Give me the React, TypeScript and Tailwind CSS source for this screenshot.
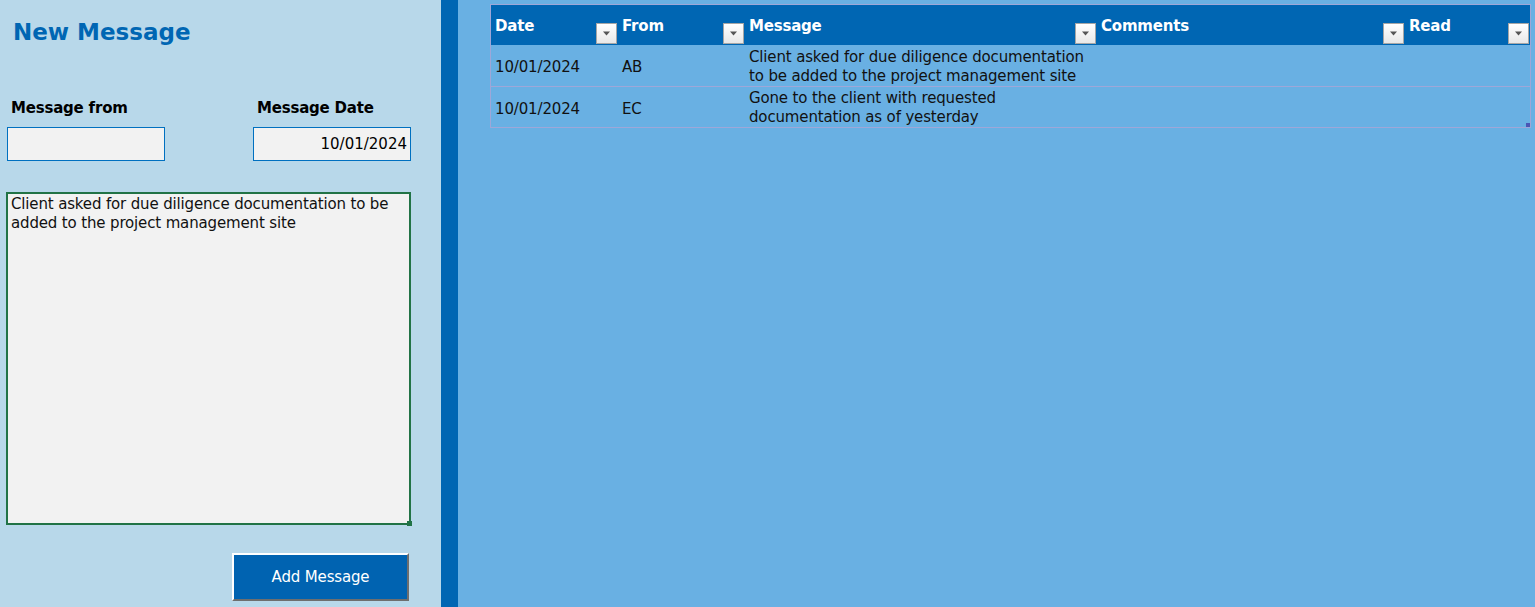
import { ReactNode } from "react";

const font = { fontFamily: '"DejaVu Sans", Verdana, sans-serif' };

function FilterButton() {
  return (
    <div className="w-[21px] h-[21px] border border-[#a6a6a6] bg-gradient-to-b from-white to-[#e8e8e8] flex items-center justify-center self-end mb-[1px] shrink-0">
      <svg width="9" height="5" viewBox="0 0 9 5">
        <path d="M1 0.5 L8 0.5 L4.5 4.5 Z" fill="#555" />
      </svg>
    </div>
  );
}

function HeaderCell({ label, width }: { label: string; width: string }) {
  return (
    <div className={`${width} flex justify-between pl-[4px] pr-[1px]`}>
      <span className="text-white font-bold text-[15px] tracking-[-0.2px] pt-[10px]">{label}</span>
      <FilterButton />
    </div>
  );
}

function Cell({ children, width, pad = "pt-[1px]" }: { children?: ReactNode; width: string; pad?: string }) {
  return (
    <div className={`${width} ${pad} flex items-center pl-[4px] text-[15px] tracking-[-0.15px] leading-[19px] text-[#111]`}>
      {children}
    </div>
  );
}

const rows = [
  {
    date: "10/01/2024",
    from: "AB",
    message: ["Client asked for due diligence documentation", "to be added to the project management site"],
  },
  {
    date: "10/01/2024",
    from: "EC",
    message: ["Gone to the client with requested", "documentation as of yesterday"],
  },
];

export default function App() {
  return (
    <div className="h-[607px] w-[1535px] flex overflow-hidden" style={font}>
      {/* Form panel */}
      <div className="w-[441px] bg-[#b8d8ea] flex flex-col pl-[6px] pr-[30px]">
        <h1 className="text-[#0066b3] font-bold text-[23px] pl-[7px] pt-[16px] leading-[32px]">New Message</h1>

        <div className="flex justify-between mt-[50px]">
          <div className="flex flex-col">
            <label className="font-bold text-[15px] tracking-[-0.2px] pl-[5px] leading-[20px]">Message from</label>
            <div className="mt-[9px] ml-[1px] w-[158px] h-[34px] border border-[#0070c0] bg-[#f2f2f2]" />
          </div>
          <div className="flex flex-col">
            <label className="font-bold text-[15px] tracking-[-0.2px] pl-[4px] leading-[20px]">Message Date</label>
            <div className="mt-[9px] w-[158px] h-[34px] border border-[#0070c0] bg-[#f2f2f2] flex items-center justify-end pr-[3px] text-[15px]">
              10/01/2024
            </div>
          </div>
        </div>

        <div className="relative mt-[31px] w-[405px] h-[333px] border-2 border-[#217346] bg-[#f2f2f2] px-[3px] pt-[1px] text-[15px] tracking-[-0.15px] leading-[19px] text-[#111]">
          Client asked for due diligence documentation to be added to the project management site
          <div className="absolute -right-[3px] -bottom-[3px] w-[5px] h-[5px] bg-[#217346]" />
        </div>

        <div className="flex justify-end mt-[28px] pr-[2px]">
          <button className="w-[177px] h-[48px] bg-[#0063b1] border-2 border-t-white border-l-white border-r-[#6e6e6e] border-b-[#6e6e6e] text-white text-[15px] tracking-[-0.15px]">
            Add Message
          </button>
        </div>
      </div>

      <div className="w-[17px] bg-[#0066b3]" />

      {/* Message log */}
      <div className="flex-1 bg-[#69b0e3] pl-[32px] pt-[4px]">
        <div className="w-[1041px] border border-[#9ea7d8] relative">
          <div className="flex h-[40px] bg-[#0066b3]">
            <HeaderCell label="Date" width="w-[127px]" />
            <HeaderCell label="From" width="w-[127px]" />
            <HeaderCell label="Message" width="w-[352px]" />
            <HeaderCell label="Comments" width="w-[308px]" />
            <HeaderCell label="Read" width="flex-1" />
          </div>
          {rows.map((r, i) => (
            <div key={i} className={`flex h-[41px] ${i > 0 ? "border-t border-[#9ea7d8]" : ""}`}>
              <Cell width="w-[127px]" pad="pt-[4px]">{r.date}</Cell>
              <Cell width="w-[127px]" pad="pt-[4px]">{r.from}</Cell>
              <Cell width="w-[352px]" pad="pt-[2px]">
                <div>
                  {r.message.map((m) => (
                    <div key={m}>{m}</div>
                  ))}
                </div>
              </Cell>
              <Cell width="w-[308px]" />
              <Cell width="flex-1" />
            </div>
          ))}
          <div className="absolute right-0 bottom-0 w-[4px] h-[4px] bg-[#4a56b5]" />
        </div>
      </div>
    </div>
  );
}
